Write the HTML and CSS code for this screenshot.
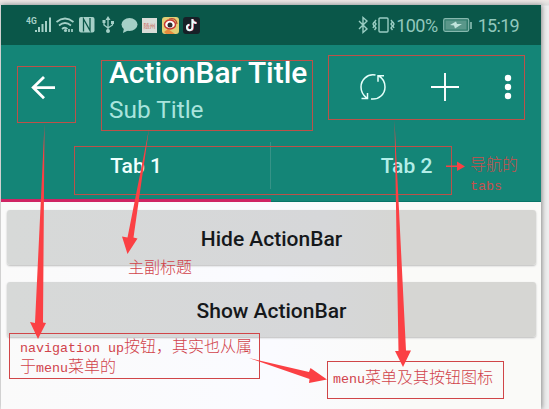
FILE: index.html
```html
<!DOCTYPE html>
<html lang="zh-CN">
<head>
<meta charset="utf-8">
<title>ActionBar</title>
<link rel="stylesheet" href="styles.css">
</head>
<body>
<div class="stage">
  <main class="phone">
    <header class="status">
      <svg class="status-icons" width="180" height="40" viewBox="0 0 180 40">
        <g fill="#a5d0c7">
          <text class="network" x="0" y="19">4G</text>
          <path d="M9 25h2v2H9zM12 22h2v5h-2zM15.500 19h2v8h-2zM19 16h2v11h-2zM23 12.500h2V27h-2z"/>
          <rect x="53" y="12" width="15.500" height="15.500" rx="2"/>
          <ellipse cx="103.500" cy="19.500" rx="8" ry="6.500"/><path d="M98 23l-1 5 6-3z"/>
          <path d="M82 11l-2.500 4h5zM76.500 15h3v3h-3zM85 16h3v3h-3z"/><circle cx="82" cy="26" r="2"/>
        </g>
        <path d="M57.500 26.500V14l6.500 11.500V13" fill="none" stroke="#0a5749" stroke-width="1.300"/>
        <g fill="none" stroke="#a5d0c7" stroke-width="1.700">
          <path d="M30.500 17q8.500-7 17 0M33 20.500q6-5 12 0M36 24q3-2.500 5.500 0M43 24v3M46 27v-3"/>
          <path d="M82 14v12M78 18v2l4 3M86.500 18v2l-4.500 3" stroke-width="1.300"/>
        </g>
        <circle cx="39.500" cy="25.500" r="1.600" fill="#a5d0c7"/>
        <rect x="116" y="13" width="15" height="15" fill="#d9ddd8"/>
        <text class="app-label" x="117.500" y="22.500">随州</text>
        <rect x="136" y="12" width="17" height="17" rx="3" fill="#e1cf75"/>
        <path d="M138 27l4-3 7 5h-9z" fill="#e78b3d"/>
        <ellipse cx="144" cy="19.500" rx="5.500" ry="4.500" fill="#fff" stroke="#c83b35" stroke-width="1.500"/>
        <circle cx="144" cy="20" r="2.500" fill="#302c2c"/>
        <path d="M143 14q7-2 8 5" fill="none" stroke="#b74c35" stroke-width="1.300"/>
        <rect x="157" y="12" width="17" height="17" rx="3" fill="#172027"/>
        <g fill="none" stroke-width="1.900">
          <path d="M167 14v8.500a2.700 2.700 0 1 1-3-2.700M167 15q1 3 4 3" stroke="#dc4f6b"/>
          <path d="M166.300 14v8.500a2.700 2.700 0 1 1-3-2.700M166.300 15q1 3 4 3" stroke="#e7ffff"/>
        </g>
      </svg>
      <div class="status-right">
        <svg width="38" height="20" viewBox="0 0 38 20" fill="none" stroke="#9acdc3" stroke-width="1.400">
          <path d="M2 6l8 8-4 3.500v-15L10 6l-8 8"/>
          <rect x="22" y="3" width="9" height="14" rx="1"/>
          <path d="M19 5l-1.500 2 1.500 2-1.500 2 1.500 2-1.500 2M17 7l-1 2 1 2-1 2M34 5l1.500 2-1.500 2 1.500 2-1.500 2 1.500 2M36 7l1 2-1 2 1 2"/>
        </svg>
        <span class="percent">100%</span>
        <svg width="30" height="16" viewBox="0 0 30 16">
          <rect x=".7" y="1.700" width="25" height="12.600" rx="1.500" fill="#2f7a6b" stroke="#86b9ae" stroke-width="1.200"/>
          <rect x="2.500" y="3.500" width="21" height="9" fill="#5a978a"/>
          <path d="M7 8l6-3.500 1 2.500h5l-7 4.500-1-3z" fill="#c0e4dc"/>
          <path d="M28 5v7" stroke="#86b9ae" stroke-width="1.700"/>
        </svg>
        <span class="clock">15:19</span>
      </div>
    </header>
    <section class="actionbar">
      <svg class="back" width="26" height="26" viewBox="0 0 26 26" fill="none" stroke="#fff" stroke-width="2.800"><path d="M14 2L3.200 12.600 14 23.200M3.500 12.600H25"/></svg>
      <div class="titles"><h1>ActionBar Title</h1><p>Sub Title</p></div>
      <svg class="actions" width="160" height="34" viewBox="0 0 160 34">
        <g fill="none" stroke="#e5fffa" stroke-width="1.500">
          <path d="M18.500 5.100C10 3.500 4 10 4 17c0 4.500 2 8 5.500 10.800M4.500 28.500h6V23"/>
          <path d="M14 29c8 1 14-5 14-12 0-5-2-8.500-6-11M27 5.700h-6v6"/>
        </g>
        <path d="M74 17h28M88 3v28" stroke="#fff" stroke-width="1.900"/>
        <g fill="#fff"><circle cx="151" cy="8" r="3.200"/><circle cx="151" cy="17" r="3.200"/><circle cx="151" cy="26" r="3.200"/></g>
      </svg>
    </section>
    <nav class="tabs"><div class="tab active">Tab 1</div><div class="tab second">Tab 2</div></nav>
    <section class="content"><button>Hide ActionBar</button><button>Show ActionBar</button></section>
  </main>
  <svg class="arrows" width="549" height="409" viewBox="0 0 549 409">
    <g fill="none" stroke="#bd5149" stroke-width="1">
      <rect x="17.500" y="66.500" width="58" height="56"/><rect x="101.500" y="60.500" width="211" height="70"/>
      <rect x="328.500" y="55.500" width="196" height="64"/><rect x="74.500" y="146.500" width="377" height="48"/>
      <rect x="9.500" y="333.500" width="250" height="45" stroke="#d04548"/><rect x="327.500" y="361.500" width="176" height="37" stroke="#d04548"/>
    </g>
    <g fill="#fb4044">
      <path d="M44.500 124L43 322.500l3 .5-8 16-8-17 5 1z"/>
      <path d="M149 129L133.500 237.500l4 1-10 15.500-5.500-17.500 5.500 1z"/>
      <path d="M394.500 120L406 350.500h5L403 367l-8-16h3.500z"/>
      <path d="M446 165.500h11v-4l8 5-8 4.500v-4h-11z"/>
      <path d="M249 358l60 14 1.500-4L327 379.500 309 383l.5-4z"/>
    </g>
  </svg>
  <div class="note tabs-note">导航的<br><span>tabs</span></div>
  <div class="note title-note">主副标题</div>
  <div class="note up-note"><span>navigation up</span>按钮，其实也从属<br>于<span>menu</span>菜单的</div>
  <div class="note menu-note"><span>menu</span>菜单及其按钮图标</div>
</div>
</body>
</html>
```
FILE: styles.css
```css
* { box-sizing: border-box; }
body { margin: 0; background: #eeeeef; font-family: Roboto, sans-serif; overflow: hidden; }
.stage { position: relative; width: 549px; height: 409px; padding: 5px 0 0 1px; background: linear-gradient(#eee7e4, #ddd 5px, #eeeeef 6px); }
.phone { width: 540px; height: 404px; background: linear-gradient(90deg, #fafafa, #fafbff 50%, #fafaf8 75%); box-shadow: 1px 0 5px #888; }
.status { display: flex; justify-content: space-between; height: 40px; background: #0a5749; }
.status-icons { margin-left: 25px; }
.network { font: 700 8.5px Roboto, sans-serif; }
.app-label { font: 6px "Noto Sans CJK SC", sans-serif; fill: #c86c60; }
.status-right { display: flex; align-items: center; padding-right: 22px; color: #91c7bc; font-size: 18px; }
.percent { margin: 0 5px 0 1px; letter-spacing: -.5px; }
.clock { margin-left: 5px; letter-spacing: -.7px; }
.actionbar { display: flex; height: 86px; background: #148577; }
.back { margin: 30px 0 0 29px; }
.titles { width: 248px; margin: 10px 0 0 53px; white-space: nowrap; }
h1 { margin: 0; color: #fff; font-size: 29.9px; font-weight: 500; line-height: 36px; }
.titles p { margin: 0; color: #a9e4dd; font-size: 24.4px; line-height: 37px; }
.actions { margin-top: 25px; }
.tabs { display: flex; height: 71px; background: #148577; color: #b3eee8; font-size: 21px; font-weight: 500; line-height: 71px; border-bottom: 1px solid #087568; }
.tab { width: 270px; height: 71px; text-align: center; }
.tab.active { color: #effffd; border-bottom: 3px solid #cf2464; background: linear-gradient(#369387, #369387) right 11px / 1px 47px no-repeat; }
.tab.second { padding-left: 1px; }
.content { display: flex; flex-direction: column; gap: 17px; padding: 8px 5px 0 6px; }
button { height: 55px; padding: 2px 0 0; border: 0; border-radius: 3px; background: linear-gradient(90deg, #d7d9d8, #d6d7d9 60%, #d6d6d3 75%); box-shadow: 0 1px 2px #bbb; color: #15181b; font: 500 21px/55px Roboto, sans-serif; }
.arrows { position: absolute; left: 0; top: 0; }
.note { position: absolute; color: #d1434b; font: 300 16px/20px "Noto Sans CJK SC", sans-serif; white-space: nowrap; }
.note span { font: 13.333px/1 "Liberation Mono", monospace; }
.tabs-note { left: 470px; top: 153px; color: #c74f4c; }
.title-note { left: 128px; top: 256px; }
.up-note { left: 20px; top: 335px; }
.menu-note { left: 333px; top: 366px; }
```
